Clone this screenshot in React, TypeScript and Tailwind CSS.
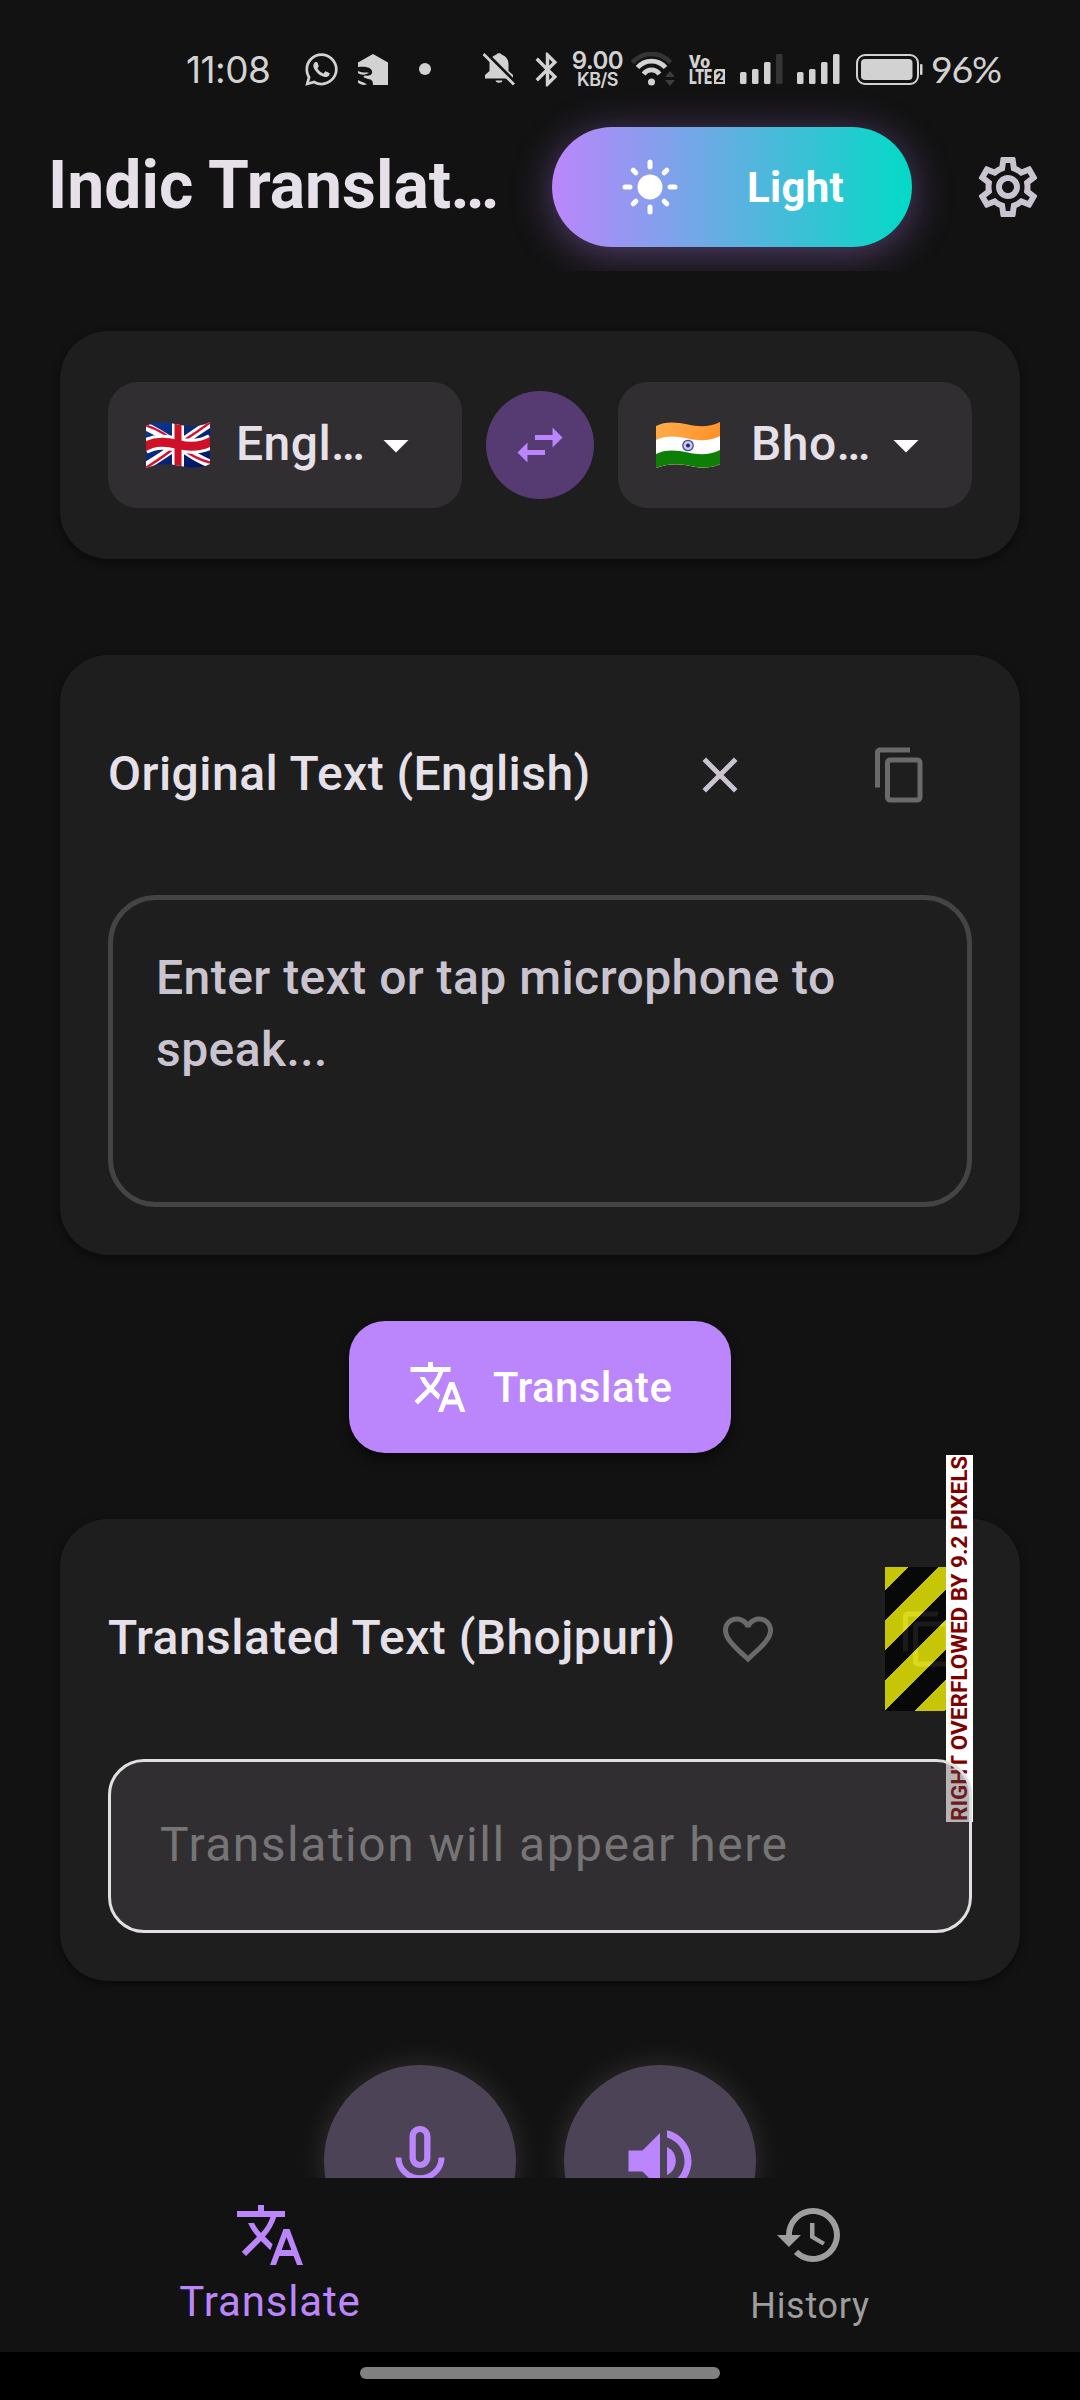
import type { ReactNode } from "react";
import {
  MdArrowDropDown,
  MdBluetooth,
  MdClose,
  MdContentCopy,
  MdFavoriteBorder,
  MdHistory,
  MdMicNone,
  MdOutlineSettings,
  MdSwapHoriz,
  MdTranslate,
  MdVolumeUp,
} from "react-icons/md";
import { FaWhatsapp } from "react-icons/fa";

const WAVE = "M0 4C9 -1 21 0 32 2.5S54 5 64 0V42C54 47 43 46 32 43.5S9 42 0 46Z";

function FlagUK() {
  return (
    <svg viewBox="0 0 64 46" className="h-[46px] w-16 shrink-0">
      <defs>
        <clipPath id="uk-wave">
          <path d={WAVE} />
        </clipPath>
        <linearGradient id="uk-blue" x1="0" y1="0" x2="1" y2="1">
          <stop offset="0" stopColor="#0a3a97" />
          <stop offset="1" stopColor="#00145f" />
        </linearGradient>
      </defs>
      <g clipPath="url(#uk-wave)" fill="none">
        <rect width="64" height="46" fill="url(#uk-blue)" />
        <path d="M-2 4C16 9 46 37 66 42M-2 45C20 33 46 12 66 0" stroke="#fff" strokeWidth="8" />
        <path d="M-2 3C12 7 20 13 28 19M36 27C46 34 56 39 66 41M-2 47C12 38 20 33 28 26M37 19C48 12 58 5 66 -1" stroke="#d81030" strokeWidth="2.4" />
        <path d="M-2 25C10 18 22 20 32 22.500S54 26 66 19" stroke="#fff" strokeWidth="15" />
        <path d="M32 -2V48" stroke="#fff" strokeWidth="12" />
        <path d="M-2 25C10 18 22 20 32 22.500S54 26 66 19" stroke="#cf1029" strokeWidth="9" />
        <path d="M32 -2V48" stroke="#cf1029" strokeWidth="7" />
      </g>
    </svg>
  );
}

function FlagIndia() {
  return (
    <svg viewBox="0 0 64 46" className="h-[46px] w-16 shrink-0">
      <defs>
        <clipPath id="in-wave">
          <path d={WAVE} />
        </clipPath>
        <linearGradient id="in-saffron" x1="0" y1="0" x2="1" y2="0.6">
          <stop offset="0" stopColor="#ffad4d" />
          <stop offset="1" stopColor="#ff8d22" />
        </linearGradient>
      </defs>
      <g clipPath="url(#in-wave)">
        <rect width="64" height="46" fill="url(#in-saffron)" />
        <path d="M0 18C9 13 21 14 32 16.500S54 19 64 14V46H0Z" fill="#fff" />
        <path d="M0 32C9 27 21 28 32 30.500S54 33 64 28V46H0Z" fill="#0e7f06" />
        <circle cx="32" cy="23.500" r="5.200" fill="#c9c9e6" stroke="#4b46a0" strokeWidth="1.300" />
        <circle cx="32" cy="23.500" r="2" fill="#28247c" />
      </g>
    </svg>
  );
}

function SunIcon() {
  return (
    <svg viewBox="0 0 24 24" className="size-[60px] shrink-0" stroke="white" strokeWidth="2" strokeLinecap="round">
      <circle cx="12" cy="12" r="5" fill="white" stroke="none" />
      <path d="M12 2v2M12 20v2M2 12h2M20 12h2M5.280 5.280l1.060 1.060M17.660 17.660l1.060 1.060M18.720 5.280l-1.060 1.060M6.340 17.660l-1.060 1.060" />
    </svg>
  );
}

function SignalBars({ dimLast = false }: { dimLast?: boolean }) {
  return (
    <svg viewBox="0 0 43 30" className="h-[30px] w-[43px] shrink-0" fill="#d2d2d2">
      <rect x="0" y="18" width="6.500" height="12" rx="1.500" />
      <rect x="12" y="15" width="6.500" height="15" rx="1.500" />
      <rect x="24" y="8" width="6.500" height="22" rx="1.500" />
      <rect x="36" y="0" width="6.500" height="30" rx="1.500" fill={dimLast ? "#343434" : "#d2d2d2"} />
    </svg>
  );
}

function StatusBar() {
  return (
    <div className="flex h-[103px] shrink-0 items-center pt-[35px] pl-[186px] font-[Inter] text-[#d2d2d2]">
      <span className="w-[119px] text-[37px] leading-none tracking-[-0.5px]">11:08</span>
      <FaWhatsapp className="-ml-0.5 size-[37px] shrink-0" />
      <svg viewBox="0 0 30 31" className="ml-[18px] h-[31px] w-[30px] shrink-0">
        <path d="M15 0L30 8.500V31H15C15 27 14 25.500 10 25L6 23.500C5 22.500 6 21 8 21.500C12 22.500 15 20 14 17C13 13.500 8 12 0 13V8.500Z" fill="#d2d2d2" />
        <path d="M0 17C4 19 7 18.500 11 18.500C8 21 3 21.500 0 19ZM0 26C3 28 6 28 9 30.500C5 31.500 2 30.500 0 28.500Z" fill="#d2d2d2" />
      </svg>
      <span className="ml-[31px] size-3 shrink-0 rounded-full bg-[#d2d2d2]" />
      <svg viewBox="0 0 32 34" className="ml-[52px] h-[34px] w-8 shrink-0">
        <path d="M13.500 2.500C14 .8 18 .8 18.500 2.500C23 4 25.500 7.500 25.500 12V19L30 23V26.500H2V23L6.500 19V12C6.500 7.500 9 4 13.500 2.500Z" fill="#d2d2d2" />
        <path d="M12.500 28.500H19.500C19 31.500 13 31.500 12.500 28.500Z" fill="#d2d2d2" />
        <path d="M2 .5L33 31.500" stroke="#121212" strokeWidth="4" />
        <path d="M.5 2L31 32.500" stroke="#d2d2d2" strokeWidth="2.800" />
      </svg>
      <MdBluetooth className="ml-[12px] size-[41px] shrink-0" />
      <span className="ml-[3px] flex w-[53px] shrink-0 flex-col items-center font-semibold whitespace-nowrap">
        <span className="text-[24px] leading-[20px] tracking-[-0.5px]">9.00</span>
        <span className="text-[18px] leading-[17px] tracking-[-0.5px]">KB/S</span>
      </span>
      <svg viewBox="0 0 44 34" className="ml-[7px] h-[34px] w-11 shrink-0" fill="none">
        <path d="M1.500 10.500C12 -1 29 -1 39.500 10.500" stroke="#343434" strokeWidth="4.500" />
        <path d="M6.500 15.500C14 7 27 7 34.500 15.500M12.500 22C17 16.500 24 16.500 28.500 22" stroke="#d2d2d2" strokeWidth="4.800" />
        <circle cx="20.500" cy="30" r="3.500" fill="#d2d2d2" />
        <path d="M39 19l5 6h-10zM39 34l5-6h-10z" fill="#3c3c3c" />
      </svg>
      <svg viewBox="0 0 36 30" className="ml-[14px] h-[30px] w-9 shrink-0 overflow-visible font-[Roboto] font-black" fill="#d2d2d2">
        <text x="0" y="13.500" fontSize="19" textLength="21" lengthAdjust="spacingAndGlyphs">Vo</text>
        <text x="0" y="29.500" fontSize="20" textLength="23" lengthAdjust="spacingAndGlyphs">LTE</text>
        <path d="M27 15h9v15h-11V17z" />
        <text x="26.500" y="27.500" fontSize="14" fill="#121212">2</text>
      </svg>
      <span className="ml-[15px] flex gap-[14px]">
        <SignalBars dimLast />
        <SignalBars />
      </span>
      <svg viewBox="0 0 67 31" className="ml-4 h-[31px] w-[67px] shrink-0">
        <rect x="1" y="1" width="61" height="29" rx="8" fill="none" stroke="#d2d2d2" strokeWidth="2" />
        <rect x="5" y="5" width="51.500" height="21" rx="4" fill="#d2d2d2" />
        <rect x="64" y="10" width="2.500" height="11" rx="1" fill="#d2d2d2" />
      </svg>
      <span className="ml-2 font-[Lato] text-[37.500px] leading-none tracking-[-1.300px]">96%</span>
    </div>
  );
}

function AppBar() {
  return (
    <header className="flex h-[168px] shrink-0 items-center pl-12 [clip-path:inset(-103px_0_0_0)]">
      <h1 className="w-[456px] truncate pb-0.5 text-[66px] leading-[84px] font-bold text-[#e6e0e9]">Indic Translator</h1>
      <button className="ml-12 flex h-[120px] w-[360px] shrink-0 items-center rounded-full bg-[linear-gradient(to_right,#bb86fc,#03dac6)] pl-[68px] shadow-[0_6px_40px_rgba(187,134,252,0.4)]">
        <SunIcon />
        <span className="ml-[67px] pt-0.5 text-[42px] leading-none font-bold tracking-[0.3px] text-white">Light</span>
      </button>
      <button className="ml-6 grid size-36 place-items-center text-[#cac4d0]">
        <MdOutlineSettings className="size-[72px]" />
      </button>
    </header>
  );
}

function Card({ className, children }: { className: string; children: ReactNode }) {
  return (
    <section className={`mx-[60px] shrink-0 rounded-[48px] bg-[#1e1e1e] p-12 shadow-[0_3px_9px_rgba(0,0,0,0.5)] ${className}`}>
      {children}
    </section>
  );
}

function LanguageSelect({ flag, label, gap }: { flag: ReactNode; label: string; gap: string }) {
  return (
    <button className="flex h-[126px] w-[354px] items-center rounded-[30px] bg-[#312e31] px-9 text-left">
      <span className="ml-0.5">{flag}</span>
      <span className={`${gap} flex-1 truncate pb-[3px] text-[48px] leading-[72px] font-medium tracking-[0.45px] text-[#e6e0e9]`}>{label}</span>
      <MdArrowDropDown className="size-[60px] shrink-0 text-white" />
    </button>
  );
}

function IconButton({ className, children }: { className: string; children: ReactNode }) {
  return <button className={`grid size-36 shrink-0 place-items-center ${className}`}>{children}</button>;
}

function OverflowMarker() {
  return (
    <span className="absolute top-0 left-[777.400px] h-36 w-[86.400px] bg-[repeating-linear-gradient(135deg,rgba(255,255,0,0.75)_0px,rgba(255,255,0,0.75)_16.500px,rgba(0,0,0,0.75)_16.500px,rgba(0,0,0,0.75)_37.700px,rgba(255,255,0,0.75)_37.700px,rgba(255,255,0,0.75)_42.426px)]">
      <span className="absolute -top-[112px] left-[61px] flex h-[367px] w-[27px] rotate-180 items-center justify-center bg-white text-[22.500px] leading-[27px] font-bold whitespace-nowrap text-[#800000] [writing-mode:vertical-rl]">
        RIGHT OVERFLOWED BY 9.2 PIXELS
      </span>
    </span>
  );
}

export default function App() {
  return (
    <div className="flex h-[2400px] w-[1080px] flex-col overflow-hidden bg-[#121212] font-[Roboto,sans-serif]">
      <StatusBar />
      <AppBar />
      <main className="flex min-h-0 flex-1 flex-col overflow-hidden pt-[60px]">
        <Card className="flex h-[228px] items-center justify-between">
          <LanguageSelect flag={<FlagUK />} label="English" gap="ml-[26px]" />
          <button className="grid size-[108px] place-items-center rounded-full bg-[#553b71] text-[#bb86fc]">
            <MdSwapHoriz className="size-[60px]" />
          </button>
          <LanguageSelect flag={<FlagIndia />} label="Bhojpuri" gap="ml-[31px]" />
        </Card>

        <Card className="mt-24 h-[600px]">
          <div className="flex h-36 items-center">
            <h2 className="flex-1 pb-[3px] text-[48px] leading-[72px] font-medium tracking-[0.45px] whitespace-nowrap text-[#e6e0e9]">Original Text (English)</h2>
            <IconButton className="text-[#cac4d0]"><MdClose className="size-[60px]" /></IconButton>
            <IconButton className="ml-9 text-[#6b696c]"><MdContentCopy className="size-[60px]" /></IconButton>
          </div>
          <div className="mt-12 h-[312px] rounded-[48px] border-[5px] border-[#444444] px-[43px] pt-[42px] text-[48px] leading-[72px] font-medium tracking-[0.45px] text-[#cac4d0]">
            Enter text or tap microphone to speak...
          </div>
        </Card>

        <button className="mt-[66px] flex h-[132px] w-[382px] shrink-0 items-center self-center rounded-[36px] bg-[#bb86fc] pl-[59px] text-white shadow-[0_6px_12px_rgba(0,0,0,0.5)]">
          <MdTranslate className="size-[60px]" />
          <span className="ml-[25px] pt-0.5 text-[42px] leading-none font-medium tracking-[0.400px]">Translate</span>
        </button>

        <Card className="mt-[66px] h-[462px]">
          <div className="relative flex h-36 items-center">
            <h2 className="w-[568px] shrink-0 pb-[3px] text-[48px] leading-[72px] font-medium tracking-[0.45px] whitespace-nowrap text-[#e6e0e9]">Translated Text (Bhojpuri)</h2>
            <IconButton className="text-[#6b696c]"><MdFavoriteBorder className="size-[60px]" /></IconButton>
            <IconButton className="ml-9 text-[#6b696c]"><MdContentCopy className="size-[60px]" /></IconButton>
            <OverflowMarker />
          </div>
          <div className="relative mt-12 flex h-[174px] items-center rounded-[36px] border-[3px] border-[#e0e0e0] bg-[rgba(77,70,77,0.4)] pb-0.5 pl-[49px] text-[48px] leading-[72px] tracking-[1.500px] text-[#757575]">
            Translation will appear here
          </div>
        </Card>

        <div className="mt-[84px] flex shrink-0 justify-center gap-12 text-[#bb86fc]">
          <button className="grid size-48 place-items-center rounded-full bg-[#4d4356] shadow-[0_0_30px_rgba(255,255,255,0.13)]">
            <MdMicNone className="size-[84px]" />
          </button>
          <button className="grid size-48 place-items-center rounded-full bg-[#4d4356] shadow-[0_0_30px_rgba(255,255,255,0.13)]">
            <MdVolumeUp className="size-[84px]" />
          </button>
        </div>
      </main>

      <nav className="flex h-[174px] shrink-0 bg-[#121212] pt-[21px]">
        <button className="flex flex-1 flex-col items-center text-[#bb86fc]">
          <MdTranslate className="size-[72px]" />
          <span className="mt-[6px] text-[42px] leading-[50px] tracking-[0.850px]">Translate</span>
        </button>
        <button className="flex flex-1 flex-col items-center text-[#9e9e9e]">
          <MdHistory className="size-[72px]" />
          <span className="mt-[14px] text-[36px] leading-[43px] tracking-[0.700px]">History</span>
        </button>
      </nav>
      <div className="flex h-12 shrink-0 justify-center bg-black pt-[15px]">
        <span className="h-3 w-[360px] rounded-full bg-[#808080]" />
      </div>
    </div>
  );
}
